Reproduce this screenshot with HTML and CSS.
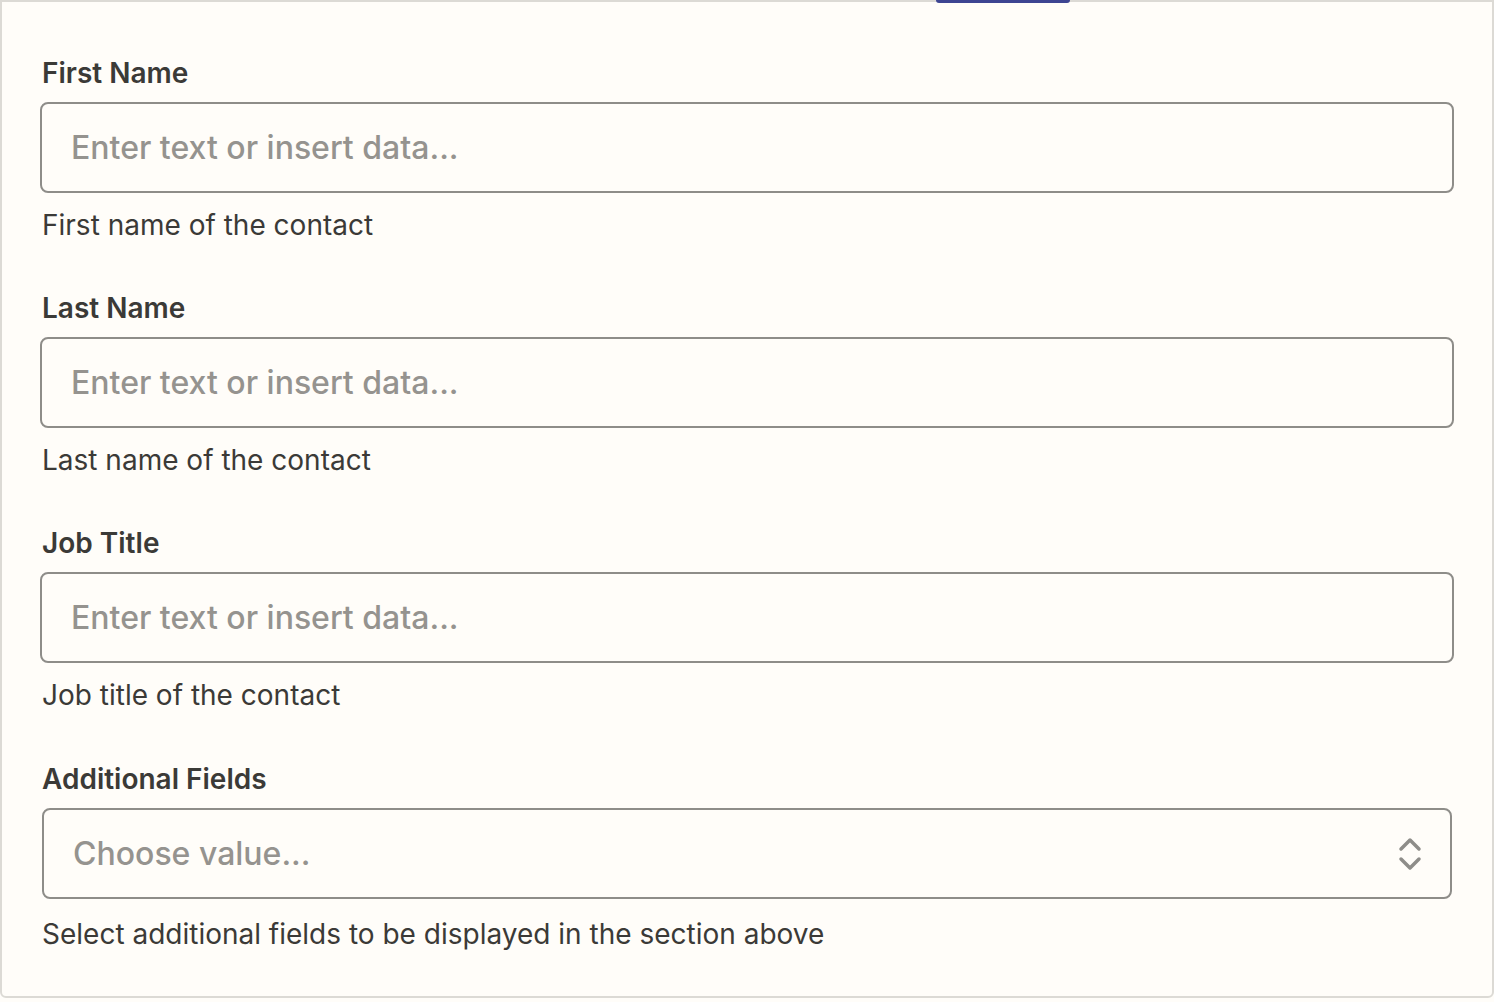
FILE: index.html
```html
<!DOCTYPE html>
<html lang="en">
<head>
  <meta charset="UTF-8">
  <title>Contact fields</title>
  <meta name="viewport" content="width=device-width, initial-scale=1.0">
  <link rel="stylesheet" href="styles.css">
</head>
<body>

<div class="panel">
  <div class="tab-edge"></div>

  <div class="field">
    <label class="field-label" for="firstName">First Name</label>
    <input id="firstName" class="text-input" type="text" placeholder="Enter text or insert data...">
    <div class="field-help">First name of the contact</div>
  </div>

  <div class="field">
    <label class="field-label" for="lastName">Last Name</label>
    <input id="lastName" class="text-input" type="text" placeholder="Enter text or insert data...">
    <div class="field-help">Last name of the contact</div>
  </div>

  <div class="field">
    <label class="field-label" for="jobTitle">Job Title</label>
    <input id="jobTitle" class="text-input" type="text" placeholder="Enter text or insert data...">
    <div class="field-help">Job title of the contact</div>
  </div>

  <div class="field field-last">
    <div class="field-label">Additional Fields</div>
    <div class="select-box">
      <span class="select-placeholder">Choose value...</span>
      <svg class="select-arrows" width="24" height="36" viewBox="0 0 24 36" fill="none" stroke="#8e8d89" stroke-width="3.5" stroke-linecap="round" stroke-linejoin="round">
        <path d="M3 13 L12 4 L21 13"/>
        <path d="M3 23 L12 32 L21 23"/>
      </svg>
    </div>
    <div class="field-help">Select additional fields to be displayed in the section above</div>
  </div>
</div>

</body>
</html>
```

FILE: styles.css
```css
body {
  margin: 0;
  background-color: #fffdf9;
  font-family: Inter, "Noto Sans", sans-serif;
  color: #3b3a37;
}

.panel {
  position: relative;
  box-sizing: border-box;
  width: 1494px;
  height: 998px;
  padding: 51px 38px 0 38px;
  background-color: #fffdf9;
  border: 2px solid #dcdad5;
  border-radius: 0 0 6px 6px;
  display: flex;
  flex-direction: column;
  gap: 43px;
}

.tab-edge {
  position: absolute;
  top: -2px;
  left: 934px;
  width: 134px;
  height: 3px;
  background-color: #3d4592;
  border-radius: 0 0 3px 3px;
}

.field {
  display: flex;
  flex-direction: column;
}

.field-last {
  margin-top: 1px;
}

.field-label {
  font-size: 28px;
  line-height: 40px;
  font-weight: 600;
  color: #3b3a37;
  margin-bottom: 9px;
  padding-left: 2px;
}

.text-input {
  box-sizing: border-box;
  width: 100%;
  height: 91px;
  margin: 0;
  padding: 0 29px;
  font-family: Inter, "Noto Sans", sans-serif;
  font-size: 32px;
  font-weight: 500;
  color: #3b3a37;
  background-color: #fffdf9;
  border: 2px solid #8e8d89;
  border-radius: 8px;
  outline: none;
}

.text-input::placeholder {
  color: #95938f;
}

.select-box {
  box-sizing: border-box;
  height: 91px;
  margin: 0 2px;
  padding: 0 28px 0 29px;
  border: 2px solid #8e8d89;
  border-radius: 8px;
  display: flex;
  align-items: center;
  justify-content: space-between;
}

.select-placeholder {
  font-size: 32px;
  font-weight: 500;
  color: #95938f;
}

.select-arrows {
  display: block;
}

.field-help {
  margin-top: 12px;
  padding-left: 2px;
  font-size: 28px;
  line-height: 40px;
  color: #3b3a37;
}

.field-last .field-help {
  margin-top: 15px;
}
```
